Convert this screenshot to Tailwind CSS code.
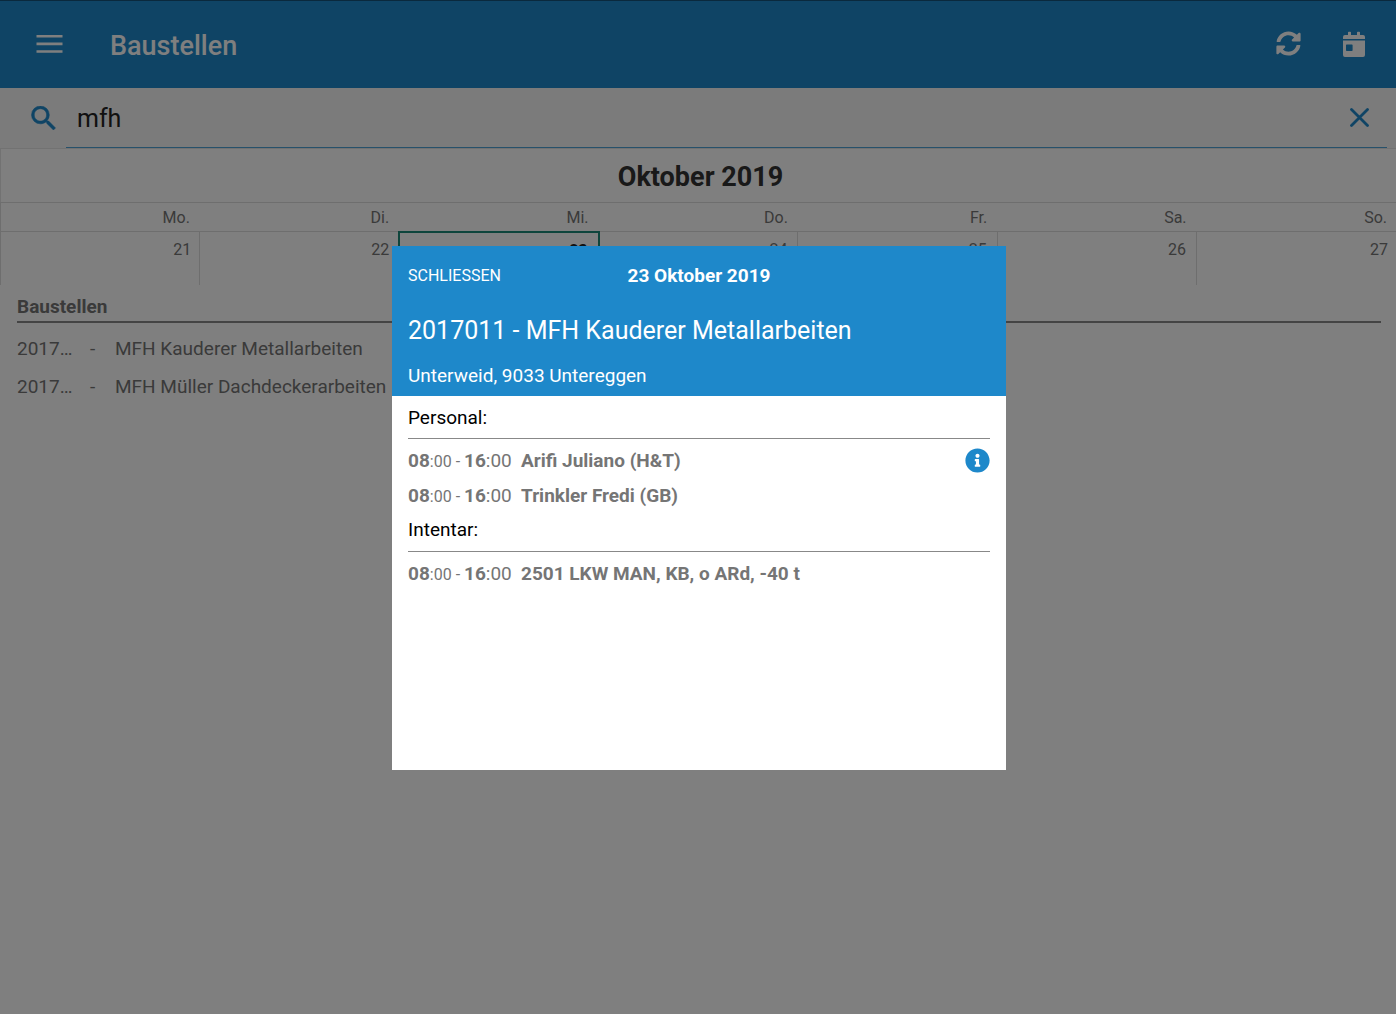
<!DOCTYPE html>
<html lang="de">
<head>
  <meta charset="UTF-8">
  <meta name="viewport" content="width=device-width, initial-scale=1.0">
  <title>Baustellen</title>
  <script src="https://cdn.jsdelivr.net/npm/@tailwindcss/browser@4"></script>
</head>
<body class="min-h-screen bg-white font-['Roboto',sans-serif] text-[#757575]">

  <!-- Kopfzeile -->
  <header class="flex h-[88px] items-center border-t border-[#15527a] bg-[#1e88ca] pb-[2px] pl-9 pr-[30px] text-white">
    <button type="button" aria-label="Menü">
      <svg class="h-5 w-[27px]" viewBox="0 0 27 20" fill="currentColor"><path d="M0.5 1h26v2.600h-26zM0.5 8.600h26v2.600h-26zM0.5 16.200h26v2.600h-26z"/></svg>
    </button>
    <h1 class="ml-[47px] mt-1 text-[27px] leading-8 font-medium">Baustellen</h1>
    <button type="button" aria-label="Aktualisieren" class="ml-auto">
      <svg class="h-[25px] w-[25px]" viewBox="0 0 512 512" fill="currentColor"><path d="M370.72 133.28C339.458 104.008 298.888 87.962 255.848 88c-77.458.068-144.328 53.178-162.791 126.85-1.344 5.363-6.122 9.15-11.651 9.15H24.103c-7.498 0-13.194-6.807-11.807-14.176C33.933 94.924 134.813 8 256 8c66.448 0 126.791 26.136 171.315 68.685L463.03 40.97C478.149 25.851 504 36.559 504 57.941V192c0 13.255-10.745 24-24 24H345.941c-21.382 0-32.09-25.851-16.971-40.971l41.75-41.749zM32 296h134.059c21.382 0 32.09 25.851 16.971 40.971l-41.75 41.75c31.262 29.273 71.835 45.319 114.876 45.28 77.418-.07 144.315-53.144 162.787-126.849 1.344-5.363 6.122-9.15 11.651-9.15h57.304c7.498 0 13.194 6.807 11.807 14.176C478.067 417.076 377.187 504 256 504c-66.448 0-126.791-26.136-171.315-68.685L48.97 471.03C33.851 486.149 8 475.441 8 454.059V320c0-13.255 10.745-24 24-24z"/></svg>
    </button>
    <button type="button" aria-label="Heute" class="ml-[41px]">
      <svg class="h-[26px] w-6" viewBox="0 0 24 26" fill="currentColor">
        <path d="M1 8V6a2 2 0 0 1 2-2h3V1.500a.8.8 0 0 1 .8-.8h1.400a.8.8 0 0 1 .8.800V4h6V1.500a.8.8 0 0 1 .8-.8h1.400a.8.8 0 0 1 .8.800V4h3a2 2 0 0 1 2 2v2z"/>
        <path fill-rule="evenodd" d="M1 9.400h22V24a2 2 0 0 1-2 2H3a2 2 0 0 1-2-2zM4.700 13.400a.7.7 0 0 0-.7.700v5.200c0 .4.3.7.7.7h5.200c.4 0 .7-.3.7-.7v-5.200a.7.7 0 0 0-.7-.7z"/>
      </svg>
    </button>
  </header>

  <!-- Suche -->
  <form class="flex h-[60px] items-center bg-[#f7f7f7] pl-[31px] pr-[9px]">
    <svg class="h-6 w-[25px] shrink-0 text-[#1e88ca]" viewBox="3 3 17.500 17.500" fill="currentColor" stroke="currentColor" stroke-width=".4"><path d="M15.500 14h-.79l-.28-.27A6.471 6.471 0 0 0 16 9.500 6.500 6.500 0 1 0 9.500 16c1.610 0 3.090-.59 4.230-1.570l.27.28v.79l5 4.990L20.490 19l-4.990-5zm-6 0C7.010 14 5 11.990 5 9.500S7.010 5 9.500 5 14 7.010 14 9.500 11.990 14 9.500 14z"/></svg>
    <div class="ml-[10px] flex h-full grow items-center border-b border-[#4fa3d6] pl-[11px] pr-[17px]">
      <input type="text" aria-label="Suche" value="mfh" class="min-w-0 grow bg-transparent pt-[2px] text-[25px] leading-8 text-[#222222] outline-none">
      <button type="button" aria-label="Suche löschen" class="text-[#1e88ca]">
        <svg class="h-5 w-5" viewBox="0 0 20 20" fill="none" stroke="currentColor" stroke-width="2.800" stroke-linecap="round"><path d="M1.500 1.500l16 16M17.500 1.500l-16 16"/></svg>
      </button>
    </div>
  </form>

  <!-- Kalenderwoche -->
  <table class="w-full table-fixed border-collapse border-l border-[#dddddd] text-right text-[16px] leading-5">
    <caption class="h-[54px] border-l border-t border-[#e4e4e4] pl-1 pt-2 text-center text-[27px] leading-10 font-bold text-[#333333]">Oktober 2019</caption>
    <thead>
      <tr class="h-[29px] border-y border-[#dddddd]">
        <th class="pr-[10px] pt-[2px] font-normal">Mo.</th>
        <th class="pr-[10px] pt-[2px] font-normal">Di.</th>
        <th class="pr-[10px] pt-[2px] font-normal">Mi.</th>
        <th class="pr-[10px] pt-[2px] font-normal">Do.</th>
        <th class="pr-[10px] pt-[2px] font-normal">Fr.</th>
        <th class="pr-[10px] pt-[2px] font-normal">Sa.</th>
        <th class="pr-[9px] pt-[2px] font-normal">So.</th>
      </tr>
    </thead>
    <tbody>
      <tr class="h-[53px] align-top">
        <td class="border-r border-[#dddddd] pr-2 pt-2">21</td>
        <td class="pr-[9px] pt-2">22</td>
        <td class="border-2 border-[#1d8a78] pr-[10px] pt-2 font-bold text-[#222222]">23</td>
        <td class="border-r border-[#dddddd] pr-[10px] pt-2">24</td>
        <td class="border-r border-[#dddddd] pr-[10px] pt-2">25</td>
        <td class="border-r border-[#dddddd] pr-[10px] pt-2">26</td>
        <td class="pr-2 pt-2">27</td>
      </tr>
    </tbody>
  </table>

  <!-- Trefferliste -->
  <main class="pl-[17px] pr-[15px] pt-2 text-[19px]">
    <h2 class="border-b-2 border-[#888888] pb-px leading-[26px] font-bold">Baustellen</h2>
    <ul class="pt-[7px] leading-[38px]">
      <li class="flex"><span class="w-[73px]">2017…</span><span class="w-[25px]">-</span><a href="#kauderer">MFH Kauderer Metallarbeiten</a></li>
      <li class="flex"><span class="w-[73px]">2017…</span><span class="w-[25px]">-</span><a href="#mueller">MFH Müller Dachdeckerarbeiten</a></li>
    </ul>
  </main>

  <!-- Dialog -->
  <div class="fixed inset-0 flex items-center justify-center bg-black/50 pl-[2px] pt-[2px]">
    <section role="dialog" aria-modal="true" aria-labelledby="dialogDatum" class="min-h-[524px] w-[614px] max-w-full bg-white text-[19px]">
      <div class="bg-[#1e88ca] px-4 text-white">
        <div class="grid h-[60px] grid-cols-[1fr_auto_1fr] items-center">
          <button type="button" class="justify-self-start text-[16px] uppercase">Schliessen</button>
          <h2 id="dialogDatum" class="font-bold">23 Oktober 2019</h2>
        </div>
        <p class="text-[25px] leading-[50px]">2017011 - MFH Kauderer Metallarbeiten</p>
        <p class="h-10 leading-10">Unterweid, 9033 Untereggen</p>
      </div>
      <div class="px-4">
        <h3 class="border-b border-[#888888] pt-[2px] leading-10 text-black">Personal:</h3>
        <ul class="pt-1 leading-[35px]">
          <li class="flex items-center">
            <span class="w-[113px]"><b>08</b><span class="text-[16px] leading-none">:00 - </span><b>16</b>:00</span>
            <b>Arifi Juliano (H&amp;T)</b>
            <button type="button" aria-label="Info" class="ml-auto text-[#1e88ca]">
              <svg class="h-[25px] w-[25px]" viewBox="0 0 512 512" fill="currentColor"><path d="M256 8C119.043 8 8 119.083 8 256c0 136.997 111.043 248 248 248s248-111.003 248-248C504 119.083 392.957 8 256 8zm0 110c23.196 0 42 18.804 42 42s-18.804 42-42 42-42-18.804-42-42 18.804-42 42-42zm56 254c0 6.627-5.373 12-12 12h-88c-6.627 0-12-5.373-12-12v-24c0-6.627 5.373-12 12-12h12v-64h-12c-6.627 0-12-5.373-12-12v-24c0-6.627 5.373-12 12-12h64c6.627 0 12 5.373 12 12v100h12c6.627 0 12 5.373 12 12v24z"/></svg>
            </button>
          </li>
          <li class="flex items-center">
            <span class="w-[113px]"><b>08</b><span class="text-[16px] leading-none">:00 - </span><b>16</b>:00</span>
            <b>Trinkler Fredi (GB)</b>
          </li>
        </ul>
        <h3 class="border-b border-[#888888] pb-1 leading-[34px] text-black">Intentar:</h3>
        <ul class="pt-1 leading-[35px]">
          <li class="flex items-center">
            <span class="w-[113px]"><b>08</b><span class="text-[16px] leading-none">:00 - </span><b>16</b>:00</span>
            <b>2501 LKW MAN, KB, o ARd, -40 t</b>
          </li>
        </ul>
      </div>
    </section>
  </div>

</body>
</html>
